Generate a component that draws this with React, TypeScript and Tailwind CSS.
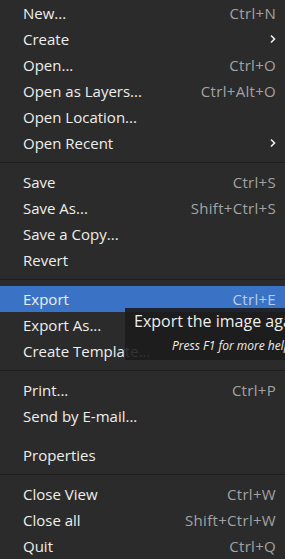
import React from "react";

type Item =
  | { kind: "item"; label: string; shortcut?: string; sub?: boolean; active?: boolean }
  | { kind: "sep" }
  | { kind: "gap" };

const items: Item[] = [
  { kind: "item", label: "New...", shortcut: "Ctrl+N" },
  { kind: "item", label: "Create", sub: true },
  { kind: "item", label: "Open...", shortcut: "Ctrl+O" },
  { kind: "item", label: "Open as Layers...", shortcut: "Ctrl+Alt+O" },
  { kind: "item", label: "Open Location..." },
  { kind: "item", label: "Open Recent", sub: true },
  { kind: "sep" },
  { kind: "item", label: "Save", shortcut: "Ctrl+S" },
  { kind: "item", label: "Save As...", shortcut: "Shift+Ctrl+S" },
  { kind: "item", label: "Save a Copy..." },
  { kind: "item", label: "Revert" },
  { kind: "sep" },
  { kind: "item", label: "Export", shortcut: "Ctrl+E", active: true },
  { kind: "item", label: "Export As..." },
  { kind: "item", label: "Create Template..." },
  { kind: "sep" },
  { kind: "item", label: "Print...", shortcut: "Ctrl+P" },
  { kind: "item", label: "Send by E-mail..." },
  { kind: "gap" },
  { kind: "item", label: "Properties" },
  { kind: "sep" },
  { kind: "item", label: "Close View", shortcut: "Ctrl+W" },
  { kind: "item", label: "Close all", shortcut: "Shift+Ctrl+W" },
  { kind: "item", label: "Quit", shortcut: "Ctrl+Q" },
];

export default function App() {
  return (
    <div
      className="relative w-[285px] h-[559px] overflow-hidden bg-[#2b2b2b] text-[#eeeeec]"
      style={{ fontFamily: '"Open Sans", "DejaVu Sans", sans-serif' }}
    >
      <div className="flex flex-col">
        {items.map((it, i) => {
          if (it.kind === "sep")
            return (
              <div key={i} className="h-[13px] flex items-center">
                <div className="h-px w-full bg-[#1e1e1e]" />
              </div>
            );
          if (it.kind === "gap") return <div key={i} className="h-[13px]" />;
          return (
            <div
              key={i}
              className={`h-[26px] flex items-center pl-[23px] pr-[9px] text-[15px] ${
                it.active ? "bg-[#3a73c6]" : ""
              }`}
            >
              <span className="flex-1 whitespace-nowrap">{it.label}</span>
              {it.shortcut && (
                <span
                  className={`whitespace-nowrap tracking-[0.3px] ${
                    it.active ? "text-[#b9cdec]" : "text-[#a3a3a3]"
                  }`}
                >
                  {it.shortcut}
                </span>
              )}
              {it.sub && (
                <svg width="8" height="10" viewBox="0 0 8 10" className="mr-[-1px]">
                  <path d="M2 1.5 L5.5 5 L2 8.5" stroke="#eeeeec" strokeWidth="1.6" fill="none" />
                </svg>
              )}
            </div>
          );
        })}
      </div>
      <div className="absolute left-[125px] top-[308px] w-[200px] h-[52px] bg-[#1c1c1c]/90 pl-[9px] pt-[2px]">
        <div className="text-[16px] whitespace-nowrap leading-[22px]">Export the image again</div>
        <div className="text-[12px] italic whitespace-nowrap leading-[20px] pl-[38px] mt-[4px]">
          Press F1 for more help
        </div>
      </div>
    </div>
  );
}
